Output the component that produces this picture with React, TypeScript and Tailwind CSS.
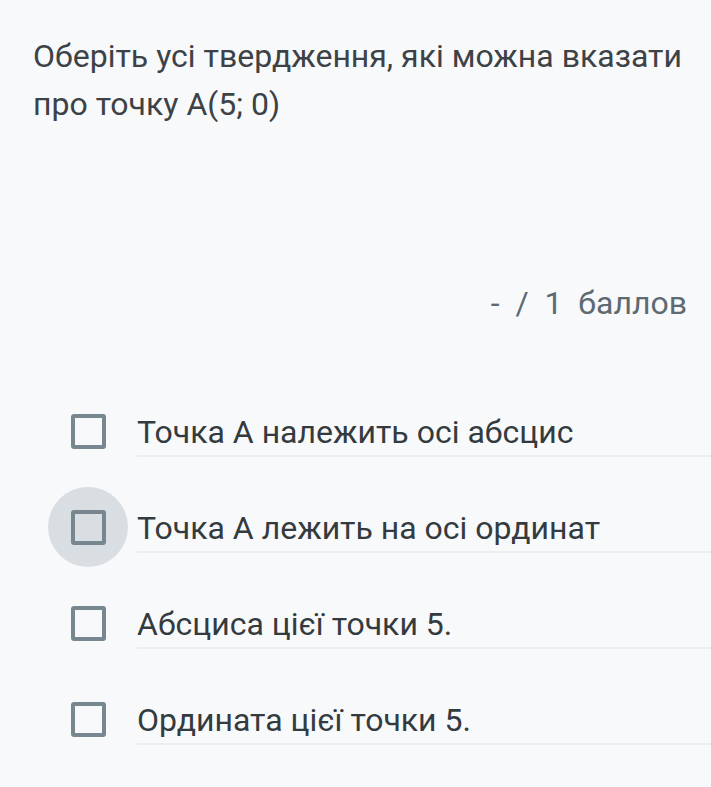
import {useState} from "react";

const options = [
    "Точка А належить осі абсцис",
    "Точка А лежить на осі ординат",
    "Абсциса цієї точки 5.",
    "Ордината цієї точки 5.",
];

function OptionRow({label, hovered}: {label: string; hovered: boolean}) {
    const [checked, setChecked] = useState(false);
    return (
        <div className="flex items-start">
            <button
                onClick={() => setChecked(!checked)}
                className={
                    "w-[80px] h-[80px] rounded-full flex items-center justify-center shrink-0 " +
                    (hovered ? "bg-[#d9dee2]" : "bg-transparent")
                }
            >
                <span
                    className={
                        "w-[35px] h-[35px] border-[4px] border-[#78878f] rounded-[3px] " +
                        (checked ? "bg-[#78878f]" : "")
                    }
                />
            </button>
            <div className="ml-[9px] mt-[23px] flex-1 border-b-2 border-[#eceef1] pb-[5px] text-[32px] leading-[36px] text-[#343b3f]">
                {label}
            </div>
        </div>
    );
}

export default function App() {
    return (
        <div className="min-h-[787px] w-full bg-[#f8f9fb] font-['Roboto',sans-serif] overflow-hidden">
            <div className="pl-[33px] pr-[20px] pt-[32px] text-[32px] leading-[48px] text-[#3c4246]">
                Оберіть усі твердження, які можна вказати про точку А(5; 0)
            </div>

            <div className="mt-[157px] pr-[24px] text-right text-[32px] leading-[36px] text-[#5d6a71] whitespace-pre">
                {"-  /  1  баллов"}
            </div>

            <div className="mt-[70px] pl-[48px] flex flex-col gap-[16px]">
                {options.map((o, i) => (
                    <OptionRow key={o} label={o} hovered={i === 1} />
                ))}
            </div>
        </div>
    );
}
